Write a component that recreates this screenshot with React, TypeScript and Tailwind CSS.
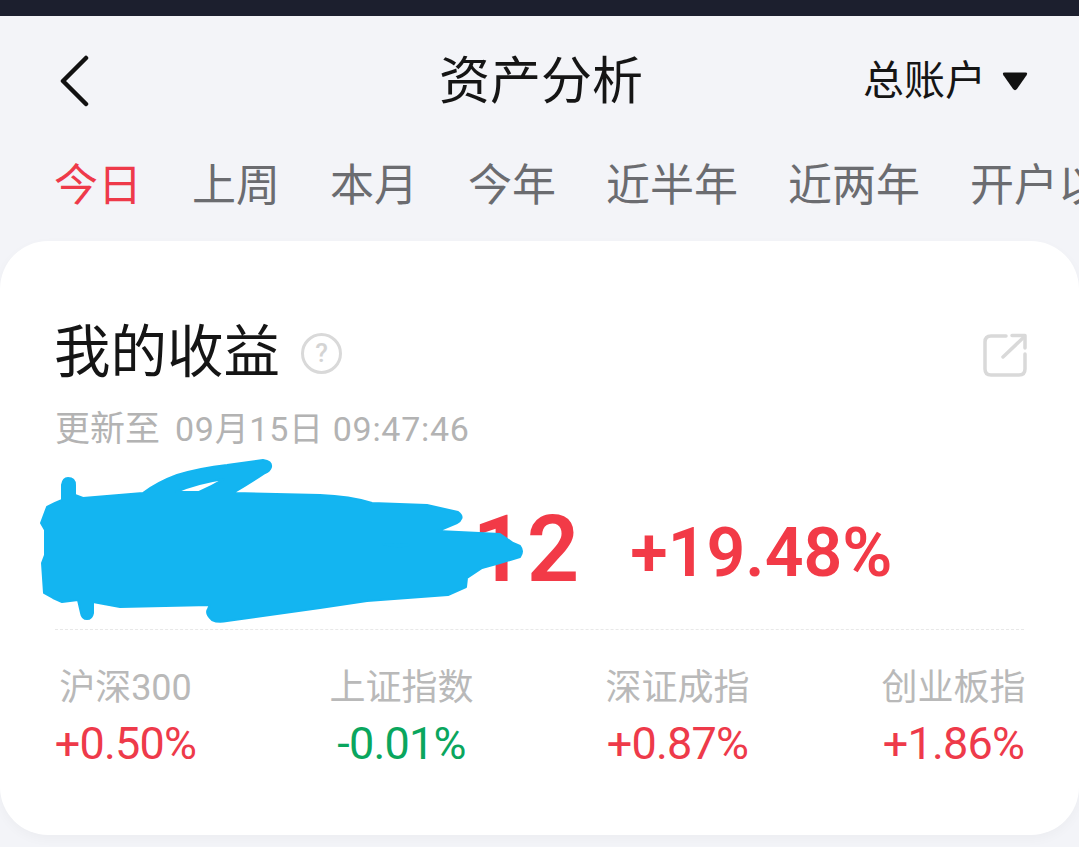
import React from "react";

const tabs = ["上周", "本月", "今年", "近半年", "近两年", "开户以来"];
const indices = [
  { name: "沪深300", value: "+0.50%", color: "text-[#ee3a4a]" },
  { name: "上证指数", value: "-0.01%", color: "text-[#0aa65e]" },
  { name: "深证成指", value: "+0.87%", color: "text-[#ee3a4a]" },
  { name: "创业板指", value: "+1.86%", color: "text-[#ee3a4a]" },
];

export default function App() {
  return (
    <div className="relative w-[1079px] h-[847px] overflow-hidden bg-[#f3f4f8] font-['Roboto','Noto_Sans_CJK_SC',sans-serif]">
      <div className="h-4 bg-[#1c1f2e]" />
      <header className="relative flex items-center justify-between h-[128px] pl-[59px] pr-[50px]">
        <svg className="mt-[2px]" width="31" height="52" viewBox="0 0 31 52" fill="none">
          <path d="M27 3 L4 26 L27 49" stroke="#111" strokeWidth="4.5" strokeLinecap="round" strokeLinejoin="round" />
        </svg>
        <h1 className="absolute left-[439px] top-[36px] text-[51px] leading-[60px] text-[#151515] font-normal">资产分析</h1>
        <div className="flex items-center gap-[15px] mt-[2px]">
          <span className="text-[41px] leading-[50px] text-[#151515]">总账户</span>
          <svg width="28" height="21" viewBox="0 0 26 20">
            <path d="M3 1.5 H23 Q25.5 1.5 24 4 L15 17 Q13 19.5 11 17 L2 4 Q.5 1.5 3 1.5Z" fill="#111" />
          </svg>
        </div>
      </header>
      <nav className="flex items-center h-[84px] pl-[54px] gap-[50px] whitespace-nowrap text-[44px] leading-[56px] text-[#6b6c70]">
        <span className="text-[#ee3a4a]">今日</span>
        {tabs.map((t) => (
          <span key={t}>{t}</span>
        ))}
      </nav>
      <main className="relative mt-[13px] h-[594px] rounded-[48px] bg-white pt-[84px] px-[55px] shadow-[0_4px_12px_rgba(0,0,0,0.03)]">
        <div className="flex items-center justify-between -mr-[3px]">
          <div className="flex items-center gap-[21px] -ml-[1px]">
            <h2 className="text-[56.5px] leading-[56px] text-[#151515] font-normal">我的收益</h2>
            <span className="flex items-center justify-center w-[41px] h-[41px] rounded-full border-[3px] border-[#d9d9d9] text-[26px] leading-none font-medium text-[#d4d4d4]">?</span>
          </div>
          <svg className="mt-[4px]" width="44" height="44" viewBox="0 0 44 44" fill="none" stroke="#d9d9d9" strokeWidth="3.5" strokeLinecap="round" strokeLinejoin="round">
            <path d="M23 3 H8 Q2 3 2 9 V36 Q2 42 8 42 H36 Q42 42 42 36 V21" />
            <path d="M20 24 L41 4" />
            <path d="M29 2.5 H42 V15" />
          </svg>
        </div>
        <p className="mt-[28px] text-[35px] leading-[40px] text-[#b3b3b3] whitespace-nowrap">
          更新至<span className="ml-[15px] text-[34px] tracking-[0.7px]">09月15日 09:47:46</span>
        </p>
        <div className="flex items-baseline mt-[52px] h-[96px] pl-[389px] font-semibold text-[#f23a47]">
          <span className="text-[92px] leading-[96px] tracking-[2px]">.12</span>
          <span className="ml-[49px] text-[68px] leading-[96px] -translate-y-[5px]">+19.48%</span>
        </div>
        <div className="mt-[31px] border-t border-dashed border-[#e8e8e8]" />
        <div className="flex justify-between mt-[38px]">
          {indices.map((i) => (
            <div key={i.name} className="w-[141px] flex flex-col items-center">
              <div className="text-[36px] leading-[40px] text-[#b9b9b9] whitespace-nowrap">{i.name}</div>
              <div className={`mt-[14px] text-[45px] leading-[44px] tracking-[-0.8px] whitespace-nowrap ${i.color}`}>{i.value}</div>
            </div>
          ))}
        </div>
      </main>
      <svg className="absolute left-0 top-0 pointer-events-none" width="1079" height="847" viewBox="0 0 1079 847">
        <path
          fillRule="evenodd"
          fill="#13b5f1"
          stroke="#13b5f1"
          strokeWidth="2"
          strokeLinejoin="round"
          d="M62 485 Q63 478 68 478 Q75 478 75 485 L75 495 L83 498 L143 493 Q158 482 177 475 Q200 468 227 465 L263 460 Q272 461 271 467 Q270 471 265 473 Q250 483 233 493 L320 495 Q350 496 372 503 L427 505 L458 512 Q463 516 461 519 Q460 522 457 523 L438 531 L500 534 L513 543 L520 546 Q524 551 520 557 L500 563 L482 568 L467 578 L466 587 L448 595 L367 601 L320 608 L227 621 Q218 623 212 620 Q205 614 208 609 L210 605 L120 607 L93 602 L93 613 Q92 619 87 619 Q82 619 81 613 L78 600 L62 602 L53 598 L44 593 L42 563 L45 555 L45 530 L41 523 L47 507 L55 503 L62 500 Z M176 492 Q197 483 224 479 Q212 486 199 492 Z M383 544 L409 545 Q396 548 383 544 Z"
        />
      </svg>
    </div>
  );
}
